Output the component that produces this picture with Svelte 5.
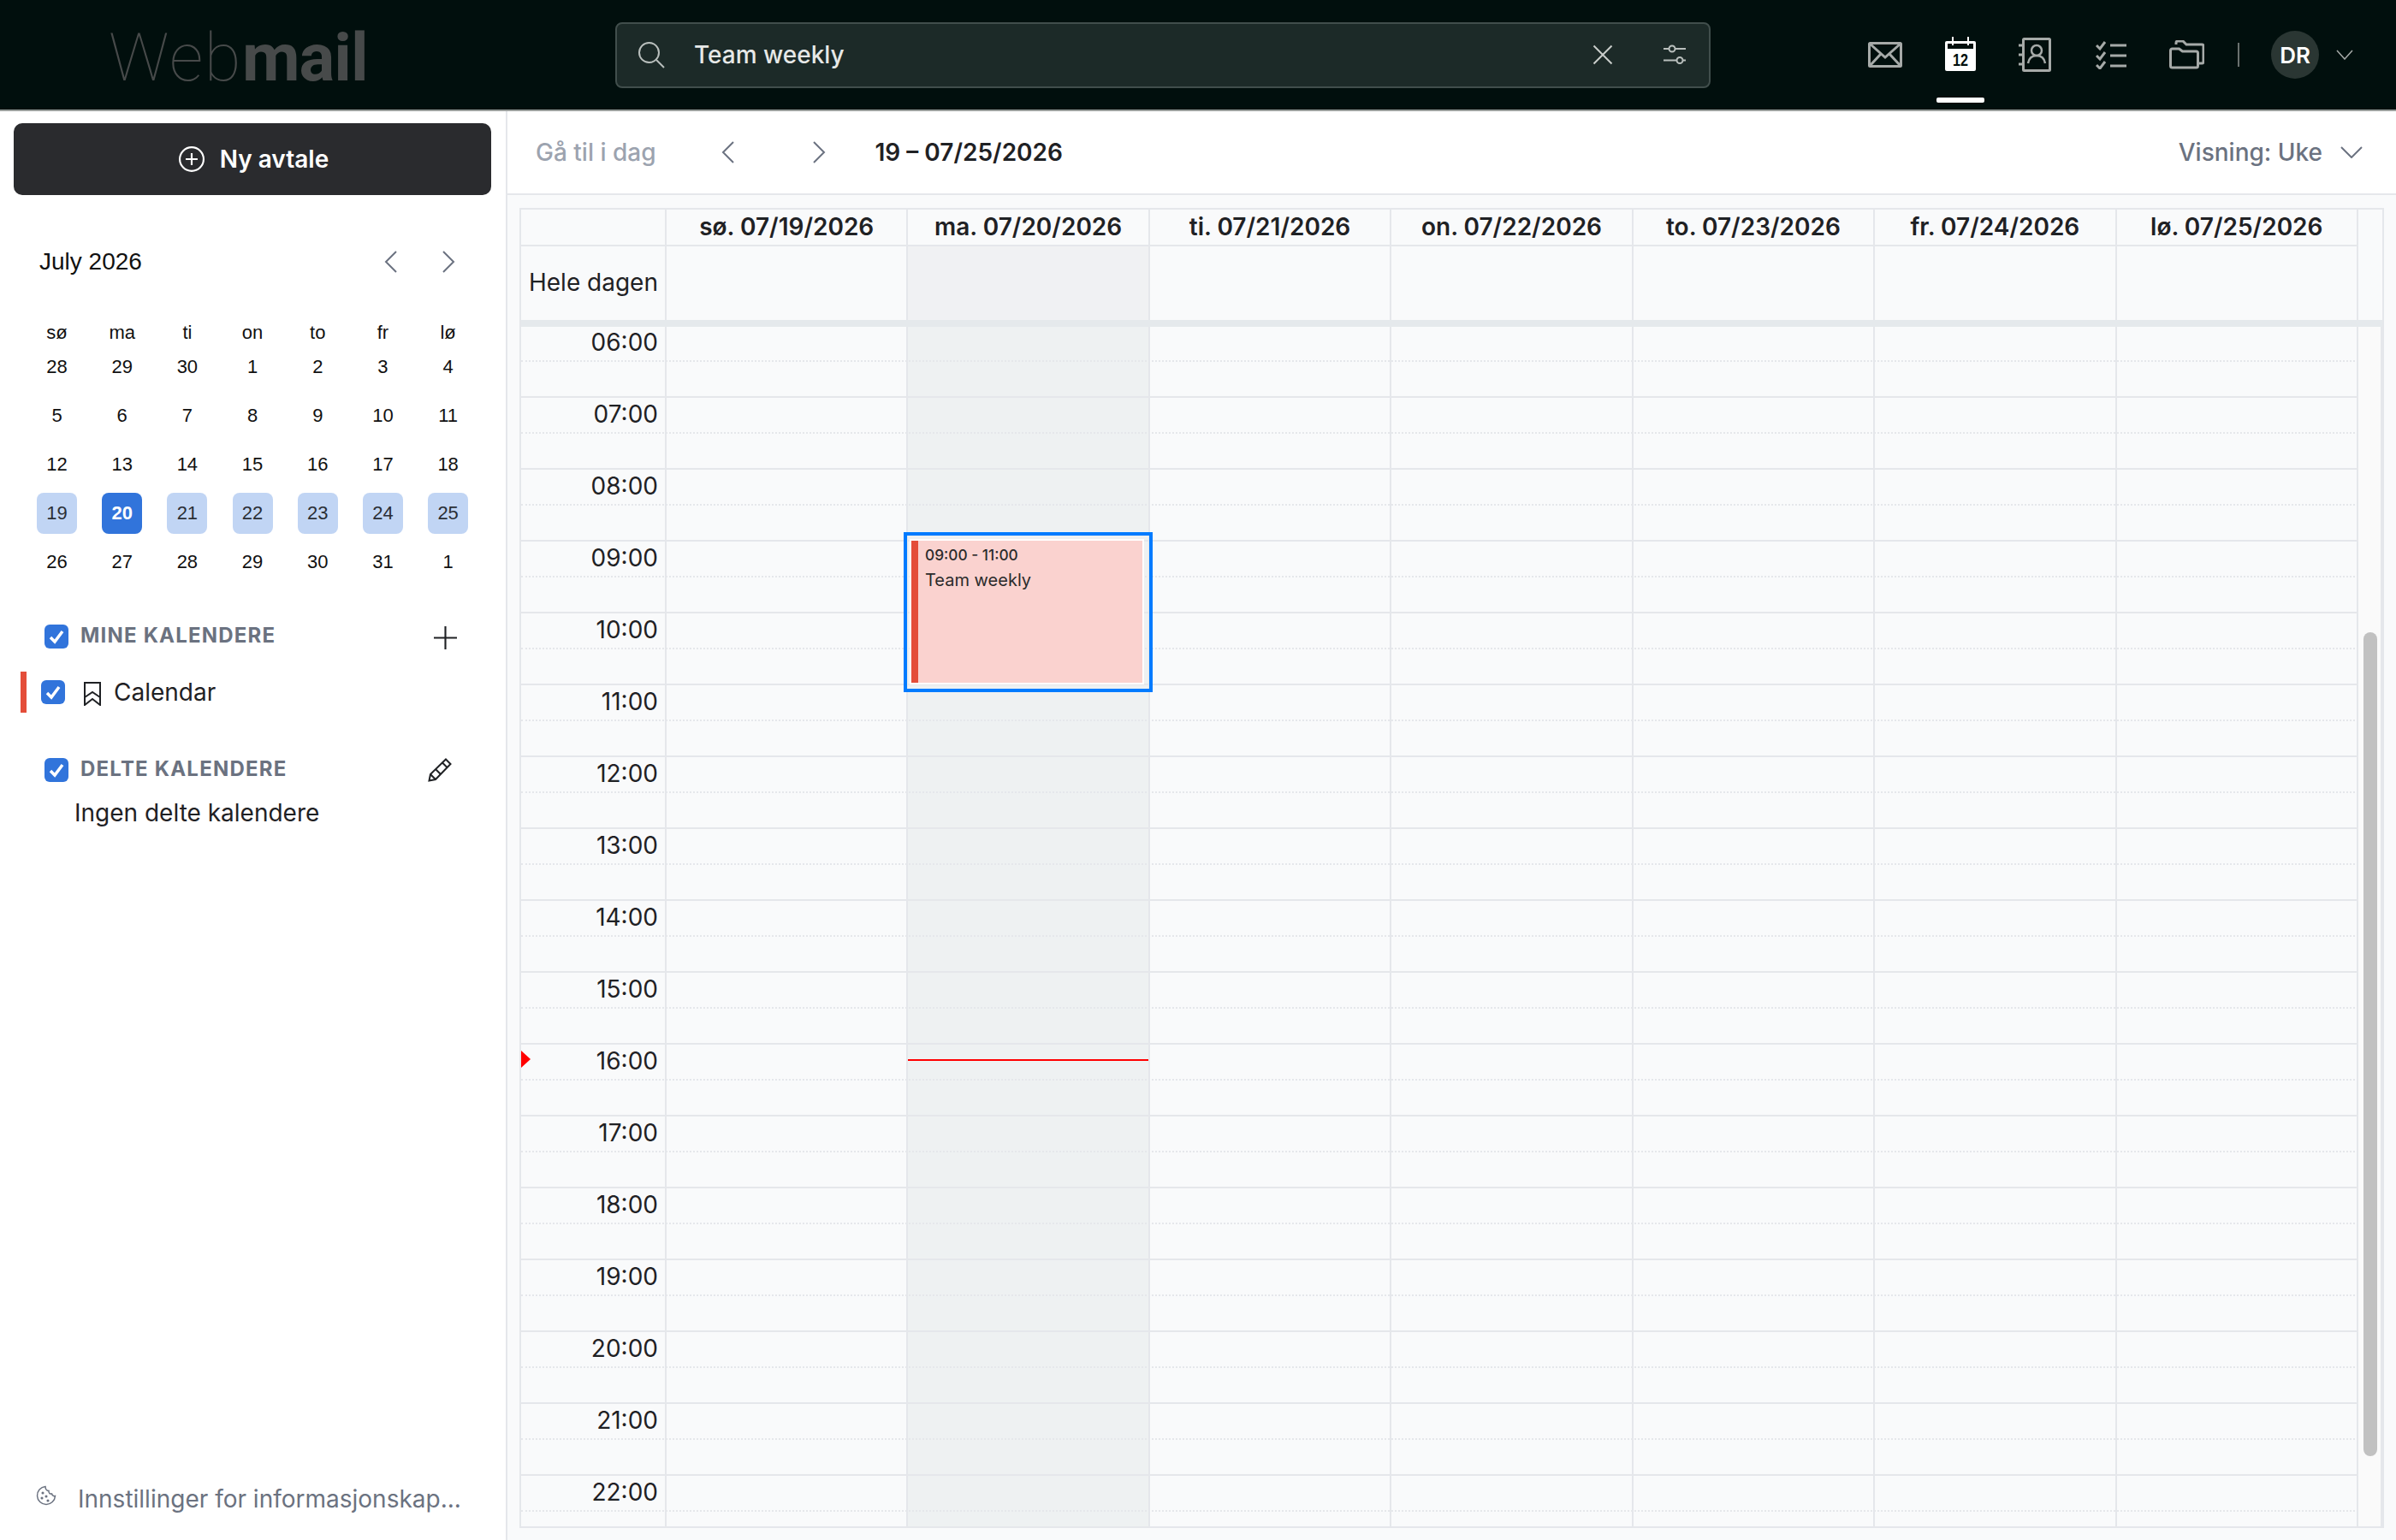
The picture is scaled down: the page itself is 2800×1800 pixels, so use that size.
<script lang="ts">
    const weekdays = ["sø", "ma", "ti", "on", "to", "fr", "lø"];
    const weeks = [
        [28, 29, 30, 1, 2, 3, 4],
        [5, 6, 7, 8, 9, 10, 11],
        [12, 13, 14, 15, 16, 17, 18],
        [19, 20, 21, 22, 23, 24, 25],
        [26, 27, 28, 29, 30, 31, 1],
    ];
    const days = [
        "sø. 07/19/2026",
        "ma. 07/20/2026",
        "ti. 07/21/2026",
        "on. 07/22/2026",
        "to. 07/23/2026",
        "fr. 07/24/2026",
        "lø. 07/25/2026",
    ];
    const hours = Array.from({ length: 17 }, (_, i) => String(i + 6).padStart(2, "0") + ":00");
</script>

<div class="page">
    <header class="topbar">
        <div class="logo"><span class="web">Web</span><span class="mail">mail</span></div>

        <div class="search">
            <svg class="search-icon" viewBox="0 0 32 32" fill="none" stroke="#b9bfbd" stroke-width="2">
                <circle cx="13.5" cy="13.5" r="11.5" />
                <path d="M22 22l9 9" />
            </svg>
            <span class="search-text">Team weekly</span>
            <svg class="clear-icon" viewBox="0 0 24 24" fill="none" stroke="#c9cdcb" stroke-width="2">
                <path d="M1.5 1.5l21 21M22.500 1.500l-21 21" />
            </svg>
            <svg class="filter-icon" viewBox="0 0 28 24" fill="none" stroke="#b9bfbd" stroke-width="2">
                <path d="M1 5h6M15 5h12M1 18.500h15M24 18.500h3" />
                <circle cx="11" cy="5" r="3.500" />
                <circle cx="20" cy="18.500" r="3.500" />
            </svg>
        </div>

        <nav class="apps">
            <svg class="app mail-icon" viewBox="0 0 40 30" fill="none" stroke="#a6aaa8" stroke-width="3">
                <rect x="1.500" y="1.500" width="37" height="27" rx="1" />
                <path d="M2 2l18 16L38 2M2 28l13-14M38 28L25 14" />
            </svg>
            <div class="app-active">
                <svg class="cal-icon" viewBox="0 0 36 40">
                    <path d="M2 5h32a2 2 0 0 1 2 2v31a2 2 0 0 1-2 2H2a2 2 0 0 1-2-2V7a2 2 0 0 1 2-2z" fill="#fff" />
                    <rect x="3" y="8" width="30" height="6" fill="#010f0d" />
                    <rect x="8" y="0" width="2" height="10" fill="#fff" />
                    <rect x="26" y="0" width="2" height="10" fill="#fff" />
                    <text x="18" y="34" text-anchor="middle" class="cal-num" textLength="18" lengthAdjust="spacingAndGlyphs">12</text>
                </svg>
            </div>
            <svg class="app book-icon" viewBox="0 0 38 40" fill="none" stroke="#a6aaa8" stroke-width="3">
                <rect x="5.500" y="1.500" width="31" height="37" rx="1" />
                <path d="M0 9h5M0 20h5M0 31h5" />
                <circle cx="21" cy="15" r="6" stroke-width="2.500" />
                <path d="M11 30c1-6 5-9 10-9s9 3 10 9" stroke-width="2.500" />
            </svg>
            <svg class="app tasks-icon" viewBox="0 0 36 33" fill="none" stroke="#a6aaa8" stroke-width="3">
                <path d="M1 5l4 4 6-8M1 17l4 4 6-8M1 28l4 4 6-8" />
                <path d="M17 5h19M17 17h19M17 29h19" />
            </svg>
            <svg class="app folder-icon" viewBox="0 0 41 34" fill="none" stroke="#a6aaa8" stroke-width="3">
                <path d="M8 5V3a2 2 0 0 1 2-2h6l4 4h18a2 2 0 0 1 2 2v18a2 2 0 0 1-2 2h-4" />
                <path d="M1.500 12a2 2 0 0 1 2-2h8l4 3h16a2 2 0 0 1 2 2v15a2 2 0 0 1-2 2h-28a2 2 0 0 1-2-2z" />
            </svg>
            <span class="divider"></span>
            <span class="avatar">DR</span>
            <svg class="avatar-chevron" viewBox="0 0 20 12" fill="none" stroke="#a6aaa8" stroke-width="1.500">
                <path d="M1 1l9 10 9-10" />
            </svg>
        </nav>
    </header>

    <div class="main">
        <aside class="sidebar">
            <button class="new-btn">
                <svg viewBox="0 0 28 28" fill="none" stroke="#fff" stroke-width="2">
                    <circle cx="14" cy="14" r="13" />
                    <path d="M14 7.500v13M7.500 14h13" />
                </svg>
                Ny avtale
            </button>

            <div class="month-head">
                <span class="month-title">July 2026</span>
                <svg class="chev-l" viewBox="0 0 16 26" fill="none" stroke="#6b7280" stroke-width="2">
                    <path d="M14 1L2 13l12 12" />
                </svg>
                <svg class="chev-r" viewBox="0 0 16 26" fill="none" stroke="#6b7280" stroke-width="2">
                    <path d="M2 1l12 12L2 25" />
                </svg>
            </div>

            <div class="mini-cal">
                {#each weekdays as d}
                    <span class="wd">{d}</span>
                {/each}
                {#each weeks as week, w}
                    {#each week as n, i}
                        <span class="dn" class:sel={w === 3} class:today={w === 3 && i === 1}>{n}</span>
                    {/each}
                {/each}
            </div>

            <div class="section first">
                <span class="check">
                    <svg viewBox="0 0 28 28" fill="none" stroke="#fff" stroke-width="3.500"><path d="M7 15l5 5 9-12" /></svg>
                </span>
                <span class="section-title">MINE KALENDERE</span>
                <svg class="plus" viewBox="0 0 28 28" fill="none" stroke="#1f2124" stroke-width="2.200">
                    <path d="M14 0v28M0 14h28" />
                </svg>
            </div>
            <div class="cal-row">
                <span class="color-bar"></span>
                <span class="check">
                    <svg viewBox="0 0 28 28" fill="none" stroke="#fff" stroke-width="3.500"><path d="M7 15l5 5 9-12" /></svg>
                </span>
                <svg class="bookmark" viewBox="0 0 20 28" fill="none" stroke="#1f2124" stroke-width="2">
                    <path d="M1 1h18v26l-9-7-9 7zM1 18l9-6 9 6" />
                </svg>
                <span class="cal-name">Calendar</span>
            </div>

            <div class="section second">
                <span class="check">
                    <svg viewBox="0 0 28 28" fill="none" stroke="#fff" stroke-width="3.500"><path d="M7 15l5 5 9-12" /></svg>
                </span>
                <span class="section-title">DELTE KALENDERE</span>
                <svg class="pencil" viewBox="0 0 28 28" fill="none" stroke="#1f2124" stroke-width="2">
                    <path d="M21 1.500l5.500 5.500L9 25l-7.500 1.500L3 19zM17 5.500l5.500 5.500M3 19l6 6M9 13l6 6" />
                </svg>
            </div>
            <div class="none">Ingen delte kalendere</div>

            <div class="cookie">
                <svg viewBox="0 0 24 24" fill="none" stroke="#6b7280" stroke-width="1.500">
                    <path d="M11 1.500a10.500 10.500 0 1 0 11.500 11c-2 .5-3.500-.5-4-2.500-2 .5-4-1-3.500-3.500-2.500 0-4-2.500-4-5z" />
                    <circle cx="8" cy="9" r=".8" fill="#6b7280" />
                    <circle cx="12" cy="13" r=".8" fill="#6b7280" />
                    <circle cx="7" cy="15" r=".8" fill="#6b7280" />
                    <circle cx="14" cy="18" r=".8" fill="#6b7280" />
                </svg>
                <span class="cookie-text">Innstillinger for informasjonskap...</span>
            </div>
        </aside>

        <section class="content">
            <div class="toolbar">
                <span class="go-today">Gå til i dag</span>
                <svg class="tool-l" viewBox="0 0 16 26" fill="none" stroke="#6b7280" stroke-width="2">
                    <path d="M14 1L2 13l12 12" />
                </svg>
                <svg class="tool-r" viewBox="0 0 16 26" fill="none" stroke="#6b7280" stroke-width="2">
                    <path d="M2 1l12 12L2 25" />
                </svg>
                <span class="range">19 – 07/25/2026</span>
                <span class="view">Visning: Uke</span>
                <svg class="view-chevron" viewBox="0 0 26 14" fill="none" stroke="#6b7280" stroke-width="2">
                    <path d="M1 1l12 12L25 1" />
                </svg>
            </div>

            <div class="grid-wrap">
                <div class="calendar">
                    <div class="row head-row">
                        <div class="cell"></div>
                        {#each days as d}
                            <div class="cell day-title">{d}</div>
                        {/each}
                    </div>
                    <div class="row allday-row">
                        <div class="cell allday-label">Hele dagen</div>
                        {#each days as d, i}
                            <div class="cell" class:now-day={i === 1}></div>
                        {/each}
                    </div>
                    <div class="band"></div>
                    <div class="body">
                        <div class="hours">
                            {#each hours as h}
                                <div class="row hour-row">
                                    <div class="cell time">{h}</div>
                                    {#each days as d, i}
                                        <div class="cell" class:now-col={i === 1}></div>
                                    {/each}
                                </div>
                            {/each}

                            <div class="selection">
                                <div class="event">
                                    <div class="event-time">09:00 - 11:00</div>
                                    <div class="event-title">Team weekly</div>
                                </div>
                            </div>
                            <div class="now-mark"></div>
                            <div class="now-line"></div>
                        </div>
                        <div class="track"><div class="thumb"></div></div>
                    </div>
                </div>
            </div>
        </section>
    </div>
</div>

<style>
    :global(body) {
        margin: 0;
        background: #fff;
    }

    .page {
        width: 2800px;
        height: 1800px;
        display: flex;
        flex-direction: column;
        overflow: hidden;
        font-family: Inter, "Liberation Sans", sans-serif;
        color: #1f2124;
    }

    /* Top bar */
    .topbar {
        height: 128px;
        flex: none;
        display: flex;
        align-items: center;
        background: #010f0d;
        border-bottom: 2px solid #9a9f9c;
    }

    .logo {
        width: 719px;
        flex: none;
        box-sizing: border-box;
        padding: 7px 0 0 127px;
        font-family: Roboto, sans-serif;
        font-size: 78px;
        line-height: 1;
        color: #474a4a;
    }

    .web {
        font-weight: 100;
        letter-spacing: 1.500px;
    }

    .mail {
        font-weight: 700;
        letter-spacing: -1px;
    }

    .search {
        width: 1280px;
        height: 77px;
        box-sizing: border-box;
        flex: none;
        display: flex;
        align-items: center;
        background: #1c2a28;
        border: 2px solid #414e4c;
        border-radius: 8px;
    }

    .search-icon {
        width: 32px;
        height: 32px;
        margin-left: 24px;
    }

    .search-text {
        margin-left: 34px;
        flex: 1;
        font-size: 28px;
        font-weight: 500;
        color: #e6e8e7;
    }

    .clear-icon {
        width: 24px;
        height: 24px;
    }

    .filter-icon {
        width: 28px;
        height: 24px;
        margin-left: 58px;
        margin-right: 26px;
    }

    .apps {
        flex: 1;
        display: flex;
        align-items: center;
        height: 100%;
        padding-left: 184px;
        position: relative;
    }

    .app {
        flex: none;
        display: block;
    }

    .mail-icon {
        width: 40px;
        height: 30px;
    }

    .app-active {
        width: 36px;
        height: 40px;
        margin-left: 50px;
        position: relative;
        margin-top: -3px;
    }

    .app-active::after {
        content: "";
        position: absolute;
        left: -10px;
        top: 71px;
        width: 56px;
        height: 6px;
        border-radius: 2px;
        background: #fff;
    }

    .cal-icon {
        width: 36px;
        height: 40px;
        display: block;
    }

    .cal-num {
        font-family: "Liberation Sans", sans-serif;
        font-size: 20px;
        font-weight: 700;
        fill: #010f0d;
    }

    .book-icon {
        width: 38px;
        height: 40px;
        margin-left: 50px;
    }

    .tasks-icon {
        width: 36px;
        height: 33px;
        margin-left: 52px;
    }

    .folder-icon {
        width: 41px;
        height: 34px;
        margin-left: 50px;
    }

    .divider {
        width: 2px;
        height: 28px;
        margin-left: 39px;
        background: #6a716f;
    }

    .avatar {
        width: 56px;
        height: 56px;
        margin-left: 37px;
        border-radius: 50%;
        background: #2a3633;
        color: #fff;
        font-size: 26px;
        font-weight: 600;
        display: flex;
        align-items: center;
        justify-content: center;
    }

    .avatar-chevron {
        width: 20px;
        height: 12px;
        margin-left: 20px;
    }

    /* Sidebar */
    .main {
        flex: 1;
        display: flex;
        min-height: 0;
    }

    .sidebar {
        width: 593px;
        flex: none;
        box-sizing: border-box;
        border-right: 2px solid #e5e7eb;
        display: flex;
        flex-direction: column;
        position: relative;
    }

    .new-btn {
        width: 558px;
        height: 84px;
        margin: 14px 0 0 16px;
        display: flex;
        align-items: center;
        justify-content: center;
        gap: 18px;
        background: #2a2b2e;
        border: none;
        border-radius: 10px;
        color: #fff;
        font-family: inherit;
        font-size: 28px;
        font-weight: 600;
        padding: 0 0 0 3px;
    }

    .new-btn svg {
        width: 30px;
        height: 30px;
    }

    .month-head {
        display: flex;
        align-items: center;
        height: 40px;
        margin-top: 58px;
        padding-left: 46px;
    }

    .month-title {
        flex: 1;
        font-family: "Liberation Sans", sans-serif;
        font-size: 28px;
        color: #111;
    }

    .chev-l,
    .chev-r {
        width: 16px;
        height: 26px;
    }

    .chev-r {
        margin-left: 51px;
        margin-right: 59px;
    }

    .mini-cal {
        display: grid;
        grid-template-columns: repeat(7, 47px);
        grid-template-rows: 31px;
        column-gap: 29.200px;
        grid-auto-rows: 48px;
        row-gap: 9px;
        margin: 39px 0 0 43px;
        font-family: "Liberation Sans", sans-serif;
        font-size: 22px;
        color: #111;
    }

    .wd,
    .dn {
        display: flex;
        align-items: center;
        justify-content: center;
    }

    .wd {
        height: 48px;
        align-self: start;
    }

    .sel {
        background: #c1d5f4;
        border-radius: 8px;
        color: #2b2f36;
    }

    .today {
        background: #3174db;
        color: #fff;
        font-weight: 700;
    }

    .section {
        display: flex;
        align-items: center;
        margin-left: 52px;
        position: relative;
        height: 28px;
    }

    .first {
        margin-top: 49px;
    }

    .second {
        margin-top: 53px;
    }

    .section-title {
        margin: -3px 0 0 14px;
        flex: 1;
        font-size: 24px;
        font-weight: 700;
        color: #6b7280;
        letter-spacing: 1.200px;
    }

    .check {
        width: 28px;
        height: 28px;
        flex: none;
        border-radius: 6px;
        background: #3174db;
        display: block;
    }

    .check svg {
        width: 28px;
        height: 28px;
        display: block;
    }

    .plus {
        width: 27px;
        height: 27px;
        margin-right: 57px;
        margin-top: 3px;
    }

    .pencil {
        width: 28px;
        height: 28px;
        margin-right: 63px;
    }

    .cal-row {
        display: flex;
        align-items: center;
        height: 48px;
        margin-top: 27px;
        padding-left: 24px;
    }

    .color-bar {
        width: 7px;
        height: 48px;
        background: #e44d39;
        margin-right: 17px;
    }

    .bookmark {
        width: 20px;
        height: 28px;
        margin-left: 22px;
        margin-top: 3px;
    }

    .cal-name {
        margin-left: 15px;
        font-size: 28px;
    }

    .none {
        margin: 18px 0 0 87px;
        font-size: 28px;
        line-height: 36px;
    }

    .cookie {
        position: absolute;
        left: 42px;
        right: 0;
        top: 1605px;
        display: flex;
        align-items: flex-start;
        color: #6b7280;
    }

    .cookie svg {
        width: 24px;
        height: 24px;
        flex: none;
        margin-top: 1px;
    }

    .cookie-text {
        margin-left: 25px;
        font-size: 28px;
        line-height: 34px;
    }

    /* Main pane */
    .content {
        flex: 1;
        min-width: 0;
        display: flex;
        flex-direction: column;
    }

    .toolbar {
        height: 96px;
        flex: none;
        display: flex;
        align-items: center;
        border-bottom: 2px solid #e5e7eb;
        padding-left: 33px;
        padding-right: 39px;
        font-size: 28px;
        font-weight: 500;
    }

    .go-today {
        color: #9ca3af;
    }

    .tool-l,
    .tool-r {
        width: 16px;
        height: 26px;
    }

    .tool-l {
        margin-left: 77px;
    }

    .tool-r {
        margin-left: 90px;
    }

    .range {
        margin-left: 57px;
        flex: 1;
        font-weight: 600;
        color: #1f2124;
    }

    .view {
        color: #6b7280;
    }

    .view-chevron {
        width: 26px;
        height: 14px;
        margin-left: 21px;
    }

    .grid-wrap {
        flex: 1;
        min-height: 0;
        display: flex;
        padding: 15px 14px 14px 14px;
        background: #f9fafb;
    }

    .calendar {
        flex: 1;
        min-width: 0;
        border: 2px solid #e5e7eb;
        display: flex;
        flex-direction: column;
    }

    .row {
        display: grid;
        grid-template-columns: 170px repeat(7, 1fr);
    }

    .head-row,
    .allday-row {
        margin-right: 28px;
    }

    .cell {
        border-right: 2px solid #e5e7eb;
        min-width: 0;
    }

    .head-row {
        height: 41px;
        border-bottom: 2px solid #e5e7eb;
    }

    .day-title {
        text-align: center;
        font-size: 28px;
        font-weight: 600;
        line-height: 41px;
    }

    .allday-row {
        height: 86px;
    }

    .allday-label {
        font-size: 28px;
        line-height: 85px;
        text-align: right;
        padding-right: 8px;
    }

    .now-day {
        background: #f0f1f3;
    }

    .band {
        height: 8px;
        flex: none;
        background: #e5e9ec;
    }

    .body {
        flex: 1;
        min-height: 0;
        display: flex;
    }

    .hours {
        flex: 1;
        min-width: 0;
        overflow: hidden;
        position: relative;
    }

    .hour-row {
        height: 84px;
        box-sizing: border-box;
        border-bottom: 2px solid #e5e7eb;
        position: relative;
    }

    .hour-row:first-child {
        height: 83px;
    }

    .hour-row::after {
        content: "";
        position: absolute;
        left: 0;
        right: 0;
        bottom: 40px;
        border-top: 2px dotted #e5e7eb;
    }

    .time {
        font-size: 28px;
        line-height: 39px;
        text-align: right;
        padding-right: 8px;
    }

    .hour-row:first-child .time {
        line-height: 37px;
    }

    .now-col {
        background: #eef1f2;
    }

    .selection {
        position: absolute;
        left: 447px;
        top: 240px;
        width: 291px;
        height: 187px;
        box-sizing: border-box;
        border: 4px solid #007bff;
        padding: 6px 8px 7px 5px;
        z-index: 2;
    }

    .event {
        height: 100%;
        box-sizing: border-box;
        background: #fad2cf;
        border-left: 8px solid #e44d39;
        outline: 2px solid #fff;
        padding: 4px 0 0 8px;
        color: #2b2b2b;
    }

    .event-time {
        font-size: 17.300px;
        font-weight: 500;
        line-height: 26px;
    }

    .event-title {
        font-size: 20px;
        line-height: 32px;
    }

    .now-mark {
        position: absolute;
        left: 0;
        top: 846px;
        border-left: 11px solid #f00;
        border-top: 10px solid transparent;
        border-bottom: 10px solid transparent;
        z-index: 2;
    }

    .now-line {
        position: absolute;
        left: 452px;
        top: 856px;
        width: 281px;
        height: 2px;
        background: #f00;
        z-index: 2;
    }

    .track {
        width: 28px;
        flex: none;
        background: #fafafa;
        border-right: 2px solid #e5e7eb;
        padding-top: 357px;
        box-sizing: border-box;
    }

    .thumb {
        width: 16px;
        height: 963px;
        margin-left: 6px;
        border-radius: 8px;
        background: #c1c1c1;
    }
</style>
